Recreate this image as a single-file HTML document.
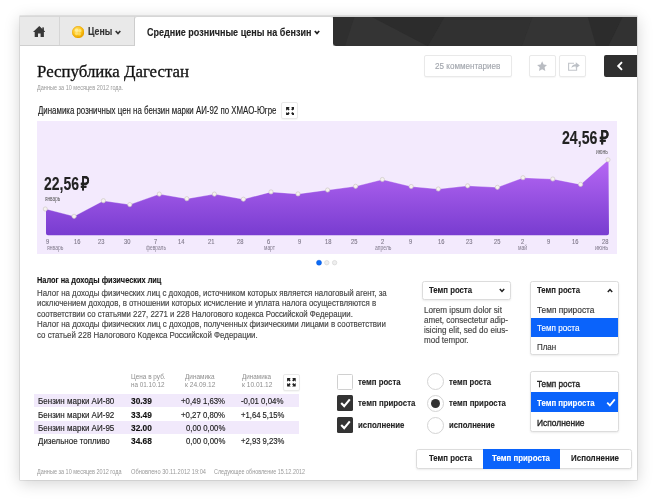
<!DOCTYPE html>
<html lang="ru"><head><meta charset="utf-8"><title>Республика Дагестан</title>
<style>
html,body{margin:0;padding:0;background:#fff}
body{width:656px;height:500px;position:relative;overflow:hidden;font-family:"Liberation Sans",sans-serif}
.abs,.t,svg.a{position:absolute}
.t{white-space:nowrap;transform-origin:0 50%;display:block}
.s{font-family:"Liberation Serif",serif}
#card{left:20px;top:16px;width:617px;height:464px;background:#fff;border-top:1px solid #d4d4d4;box-sizing:border-box;box-shadow:0 3px 15px rgba(0,0,0,.18),0 0 0 .5px rgba(0,0,0,.16)}
#tabs{left:20px;top:16px;width:314px;height:29.5px;background:#e9e9e9;border-bottom:1px solid #cfcfcf;box-sizing:border-box;box-shadow:inset 0 1px 0 #d8d8d8}
#tabdiv{left:59px;top:16px;width:1px;height:29px;background:#d6d6d6}
#tabact{left:134px;top:16px;width:199px;height:30px;background:#fff;border-left:1px solid #cdcdcd;border-top:1px solid #d6d6d6;border-radius:3px 3px 0 0;box-sizing:border-box}
#dark{left:332.6px;top:16.8px;width:304.4px;height:28.8px;background:#2f2f2f;border-radius:0 0 0 3px;overflow:hidden}
.btn{background:#fff;border:1px solid #e9e9e9;border-radius:2px;box-sizing:border-box;box-shadow:0 1px 1px rgba(0,0,0,.04)}
.sel{background:#fff;border:1px solid #dcdcdc;border-radius:2.5px;box-sizing:border-box;box-shadow:0 1px 2px rgba(0,0,0,.08)}
.row{left:34px;width:265px;height:13px;background:#f1e9fb}
.cb{width:16px;height:16px;box-sizing:border-box;border-radius:1.5px}
.cb.off{background:#fff;border:1px solid #d0d0d0}
.cb.on{background:#333}
.rd{width:17px;height:17px;box-sizing:border-box;border-radius:50%;background:#fff;border:1px solid #d4d4d4}
</style></head><body>
<div id="card" class="abs"></div>
<div id="tabs" class="abs"></div>
<div id="tabdiv" class="abs"></div>
<div id="tabact" class="abs"></div>
<div id="dark" class="abs"><svg width="305" height="29" viewBox="0 0 305 29" style="display:block"><polygon points="21.8,-0.8 37.6,-0.8 95.0,29.2 12.0,29.2" fill="#343434"/><polygon points="37.6,-0.8 112.0,-0.8 95.0,29.2" fill="#2c2c2c"/><polygon points="112.0,-0.8 199.8,-0.8 188.9,29.2 95.0,29.2" fill="#313131"/><polygon points="199.8,-0.8 254.7,-0.8 263.3,29.2 188.9,29.2" fill="#343434"/><polygon points="254.7,-0.8 290.1,-0.8 275.4,29.2 263.3,29.2" fill="#2c2c2c"/><polygon points="290.1,-0.8 307.4,-0.8 307.4,29.2 275.4,29.2" fill="#323232"/></svg></div>
<!-- home icon -->
<svg class="a" style="left:32.9px;top:25.8px" width="12.6" height="11.2" viewBox="0 0 12.6 11.2"><path d="M6.3 0 L12.6 6.1 H10.9 V11.2 H7.6 V7.4 H5 V11.2 H1.7 V6.1 H0 Z" fill="#383838"/><rect x="9.3" y="1.4" width="1.6" height="3.4" fill="#383838"/></svg>
<!-- coin -->
<svg class="a" style="left:71.7px;top:25.8px" width="12.4" height="12.4" viewBox="0 0 12 12"><defs><radialGradient id="cg" cx="40%" cy="35%" r="65%"><stop offset="0" stop-color="#ffe680"/><stop offset=".6" stop-color="#fcc419"/><stop offset="1" stop-color="#e8a200"/></radialGradient></defs><circle cx="6" cy="6" r="5.7" fill="url(#cg)" stroke="#eaa400" stroke-width=".6"/><circle cx="4.5" cy="4.1" r="1.7" fill="#fff0a0" opacity=".85"/><circle cx="7.6" cy="4.6" r="1.6" fill="#ffe98a" opacity=".8"/><circle cx="4.4" cy="7.3" r="1.6" fill="#ffe680" opacity=".75"/><circle cx="7.3" cy="7.7" r="1.5" fill="#ffdf6a" opacity=".7"/></svg>
<!-- chevrons -->
<svg class="a" style="left:115.3px;top:30.2px" width="6" height="5" viewBox="0 0 6 5"><path d="M.7 1 L3 3.5 L5.3 1" fill="none" stroke="#333" stroke-width="1.7"/></svg>
<svg class="a" style="left:313.8px;top:30px" width="6" height="5" viewBox="0 0 6 5"><path d="M.8 1 L3 3.4 L5.2 1" fill="none" stroke="#222" stroke-width="1.7"/></svg>
<!-- buttons -->
<div class="abs btn" style="left:424px;top:55px;width:88px;height:22px"></div>
<div class="abs btn" style="left:529px;top:55px;width:27px;height:22px"></div>
<div class="abs btn" style="left:559px;top:55px;width:26.5px;height:22px"></div>
<svg class="a" style="left:536.8px;top:60.6px" width="10.3" height="10.3" viewBox="0 0 11 11"><path d="M5.5 0.3 L7.1 3.8 L10.9 4.2 L8.1 6.8 L8.9 10.6 L5.5 8.7 L2.1 10.6 L2.9 6.8 L0.1 4.2 L3.9 3.8 Z" fill="#b9bcc2"/></svg>
<svg class="a" style="left:567.6px;top:60.8px" width="12" height="10" viewBox="0 0 12 10"><path d="M6 2.2 H0.6 V9.2 H8.6 V7" fill="none" stroke="#c2c5ca" stroke-width="1.1"/><path d="M3.4 7 C3.8 4.4 5.4 3.3 7.8 3.3 V1.2 L11.8 4.4 L7.8 7.6 V5.5 C6 5.5 4.5 5.8 3.4 7 Z" fill="#bcc0c6"/></svg>
<div class="abs" style="left:604px;top:55px;width:33px;height:22px;background:#2f2f2f;border-radius:2px 0 0 2px"></div>
<svg class="a" style="left:615.6px;top:61.3px" width="8" height="10" viewBox="0 0 8 10"><path d="M6 1.2 L2.2 5 L6 8.8" fill="none" stroke="#fff" stroke-width="1.9"/></svg>
<!-- fullscreen btn 1 -->
<div class="abs btn" style="left:280.9px;top:102px;width:17px;height:17px"></div>
<svg class="a fs" style="left:285.7px;top:106.6px" width="8.8" height="8.6" viewBox="0 0 9 9"><path d="M0 0H3.8L0 3.8Z M9 0V3.8L5.2 0Z M0 9V5.2L3.8 9Z M9 9H5.2L9 5.2Z" fill="#222"/><path d="M1 1L3.1 3.1M8 1L5.9 3.1M1 8L3.1 5.9M8 8L5.9 5.9" stroke="#222" stroke-width="1.9"/></svg>
<!-- chart -->
<svg class="a" style="left:37px;top:120.8px" width="580.2" height="133.5" viewBox="37 120.8 580.2 133.5">
<defs><linearGradient id="pg" x1="0" y1="0" x2="0" y2="1"><stop offset="0" stop-color="#b768f4"/><stop offset="1" stop-color="#783cd0"/></linearGradient></defs>
<rect x="37" y="120.8" width="580.2" height="133.5" fill="#f3eafd"/>
<path id="area" d="M46,208.8 L74.1,216.1 L103.4,200.5 L129.8,204.4 L159.3,193.9 L186.8,198.5 L214.4,193.9 L243.4,199 L271,191.7 L298,193.7 L327.6,189.8 L355.6,186.1 L382.4,179.3 L411.2,186.3 L438.3,188.8 L467.6,185.6 L497.4,187.1 L523,177.5 L552.8,178.8 L580.6,184.2 L608.5,159.6 L609,233 Q609,235 607,235 L48,235 Q46,235 46,233 Z" fill="url(#pg)"/>
<polyline points="46,208.8 74.1,216.1 103.4,200.5 129.8,204.4 159.3,193.9 186.8,198.5 214.4,193.9 243.4,199 271,191.7 298,193.7 327.6,189.8 355.6,186.1 382.4,179.3 411.2,186.3 438.3,188.8 467.6,185.6 497.4,187.1 523,177.5 552.8,178.8 580.6,184.2 608.5,159.6" fill="none" stroke="#fff" stroke-opacity=".35" stroke-width=".9"/>
<g fill="#f5f2ef" stroke="#cfc8c6" stroke-width=".7">
<circle cx="45.3" cy="208.8" r="2.1"/><circle cx="74.1" cy="216.1" r="2.1"/><circle cx="103.4" cy="200.5" r="2.1"/><circle cx="129.8" cy="204.4" r="2.1"/><circle cx="159.3" cy="193.9" r="2.1"/><circle cx="186.8" cy="198.5" r="2.1"/><circle cx="214.4" cy="193.9" r="2.1"/><circle cx="243.4" cy="199" r="2.1"/><circle cx="271" cy="191.7" r="2.1"/><circle cx="298" cy="193.7" r="2.1"/><circle cx="327.6" cy="189.8" r="2.1"/><circle cx="355.6" cy="186.1" r="2.1"/><circle cx="382.4" cy="179.3" r="2.1"/><circle cx="411.2" cy="186.3" r="2.1"/><circle cx="438.3" cy="188.8" r="2.1"/><circle cx="467.6" cy="185.6" r="2.1"/><circle cx="497.4" cy="187.1" r="2.1"/><circle cx="523" cy="177.5" r="2.1"/><circle cx="552.8" cy="178.8" r="2.1"/><circle cx="580.6" cy="184.2" r="2.1"/><circle cx="608" cy="159.6" r="2.1"/>
</g></svg>
<!-- pager dots -->
<svg class="a" style="left:314px;top:258.5px" width="26" height="8" viewBox="314 258 26 8"><circle cx="319" cy="261.7" r="2.5" fill="#0a6cf5" stroke="#0a55d8" stroke-width=".5"/><circle cx="326.8" cy="261.7" r="2.2" fill="#eee" stroke="#d5d5d5" stroke-width=".7"/><circle cx="334.6" cy="261.7" r="2.2" fill="#eee" stroke="#d5d5d5" stroke-width=".7"/></svg>
<!-- select 1 -->
<div class="abs sel" style="left:422px;top:280.7px;width:89px;height:19.8px"></div>
<svg class="a" style="left:498.8px;top:288.2px" width="6" height="5" viewBox="0 0 6 5"><path d="M.8 1 L3 3.4 L5.2 1" fill="none" stroke="#222" stroke-width="1.5"/></svg>
<!-- dropdown -->
<div class="abs sel" style="left:530.2px;top:281.2px;width:88.8px;height:74px"></div>
<svg class="a" style="left:607px;top:288px" width="6" height="5" viewBox="0 0 6 5"><path d="M.8 4 L3 1.6 L5.2 4" fill="none" stroke="#222" stroke-width="1.5"/></svg>
<div class="abs" style="left:530.7px;top:317.6px;width:87.8px;height:19.2px;background:#0a63fb"></div>
<!-- table -->
<div class="abs btn" style="left:282.9px;top:374px;width:17px;height:17px"></div>
<svg class="a fs" style="left:287.3px;top:378.2px" width="8.8" height="8.6" viewBox="0 0 9 9"><path d="M0 0H3.8L0 3.8Z M9 0V3.8L5.2 0Z M0 9V5.2L3.8 9Z M9 9H5.2L9 5.2Z" fill="#222"/><path d="M1 1L3.1 3.1M8 1L5.9 3.1M1 8L3.1 5.9M8 8L5.9 5.9" stroke="#222" stroke-width="1.9"/></svg>
<div class="abs row" style="top:394.2px"></div>
<div class="abs row" style="top:421.2px"></div>
<!-- checkboxes -->
<div class="abs cb off" style="left:337px;top:373.5px"></div>
<div class="abs cb on" style="left:337px;top:395.2px"></div>
<div class="abs cb on" style="left:337px;top:416.8px"></div>
<svg class="a" style="left:339.6px;top:398.3px" width="11" height="10" viewBox="0 0 11 10"><path d="M1.2 5 L4.2 8.1 L9.8 1.4" fill="none" stroke="#fff" stroke-width="2.1"/></svg>
<svg class="a" style="left:339.6px;top:419.9px" width="11" height="10" viewBox="0 0 11 10"><path d="M1.2 5 L4.2 8.1 L9.8 1.4" fill="none" stroke="#fff" stroke-width="2.1"/></svg>
<!-- radios -->
<div class="abs rd" style="left:427px;top:373.3px"></div>
<div class="abs rd" style="left:427px;top:395px"></div>
<div class="abs rd" style="left:427px;top:416.7px"></div>
<div class="abs" style="left:431px;top:399px;width:9px;height:9px;border-radius:50%;background:#333"></div>
<!-- listbox -->
<div class="abs sel" style="left:530.2px;top:371.3px;width:88.8px;height:60.9px"></div>
<div class="abs" style="left:530.7px;top:392px;width:87.8px;height:19.8px;background:#0a63fb"></div>
<svg class="a" style="left:605.9px;top:397.6px" width="10" height="9" viewBox="0 0 10 9"><path d="M1.2 4.6 L3.9 7.3 L8.8 1.4" fill="none" stroke="#fff" stroke-width="1.8"/></svg>
<!-- segmented -->
<div class="abs sel" style="left:416px;top:449px;width:215.5px;height:19.5px"></div>
<div class="abs" style="left:483px;top:449px;width:77px;height:19.5px;background:#0a63fb"></div>
<div id="tx" class="abs" style="left:0;top:0;width:656px;height:500px;will-change:transform">
<span class="t" style="left:88.0px;top:25.3px;font-size:10.2px;line-height:13.26px;color:#333;font-weight:700;transform:scaleX(0.8650);-webkit-text-stroke:0.12px;">Цены</span>
<span class="t" style="left:147.4px;top:25.6px;font-size:10.2px;line-height:13.26px;color:#222;font-weight:700;transform:scaleX(0.8860);-webkit-text-stroke:0.12px;">Средние розничные цены на бензин</span>
<span class="t" style="left:434.7px;top:61.0px;font-size:8.7px;line-height:11.31px;color:#a3a7ae;transform:scaleX(0.9312);-webkit-text-stroke:0.15px;">25 комментариев</span>
<span class="t s" style="left:37.4px;top:60.2px;font-size:17.4px;line-height:22.62px;color:#111;transform:scaleX(0.9685);-webkit-text-stroke:0.3px;">Республика Дагестан</span>
<span class="t" style="left:37.4px;top:83.0px;font-size:7px;line-height:9.1px;color:#999;transform:scaleX(0.7903);">Данные за 10 месяцев 2012 года.</span>
<span class="t" style="left:37.6px;top:102.8px;font-size:11px;line-height:14.3px;color:#222;transform:scaleX(0.7161);-webkit-text-stroke:0.15px;">Динамика розничных цен на бензин марки АИ-92 по ХМАО-Югре</span>
<span class="t" style="left:43.9px;top:171.7px;font-size:19px;line-height:24.7px;color:#222;font-weight:700;transform:scaleX(0.7361);-webkit-text-stroke:0.12px;">22,56</span>
<span class="t" style="left:81.4px;top:171.7px;font-size:19px;line-height:24.7px;color:#222;font-weight:700;transform:scaleX(0.7545);-webkit-text-stroke:0.12px;">₽</span>
<span class="t" style="left:44.6px;top:195.4px;font-size:6.5px;line-height:8.45px;color:#555;transform:scaleX(0.7201);">январь</span>
<span class="t" style="left:562.2px;top:126.0px;font-size:19px;line-height:24.7px;color:#222;font-weight:700;transform:scaleX(0.7445);-webkit-text-stroke:0.12px;">24,56</span>
<span class="t" style="left:599.6px;top:126.0px;font-size:19px;line-height:24.7px;color:#222;font-weight:700;transform:scaleX(0.8000);-webkit-text-stroke:0.12px;">₽</span>
<span class="t" style="left:596.3px;top:148.1px;font-size:6.5px;line-height:8.45px;color:#555;transform:scaleX(0.7621);">июнь</span>
<span class="t" style="left:46.0px;top:237.0px;font-size:7.2px;line-height:9.36px;color:#807a8c;transform:scaleX(0.8000);-webkit-text-stroke:0.15px;">9</span>
<span class="t" style="left:73.8px;top:237.0px;font-size:7.2px;line-height:9.36px;color:#807a8c;transform:scaleX(0.8000);-webkit-text-stroke:0.15px;">16</span>
<span class="t" style="left:97.8px;top:237.0px;font-size:7.2px;line-height:9.36px;color:#807a8c;transform:scaleX(0.8000);-webkit-text-stroke:0.15px;">23</span>
<span class="t" style="left:124.4px;top:237.0px;font-size:7.2px;line-height:9.36px;color:#807a8c;transform:scaleX(0.8000);-webkit-text-stroke:0.15px;">30</span>
<span class="t" style="left:154.4px;top:237.0px;font-size:7.2px;line-height:9.36px;color:#807a8c;transform:scaleX(0.8000);-webkit-text-stroke:0.15px;">7</span>
<span class="t" style="left:177.8px;top:237.0px;font-size:7.2px;line-height:9.36px;color:#807a8c;transform:scaleX(0.8000);-webkit-text-stroke:0.15px;">14</span>
<span class="t" style="left:207.8px;top:237.0px;font-size:7.2px;line-height:9.36px;color:#807a8c;transform:scaleX(0.8000);-webkit-text-stroke:0.15px;">21</span>
<span class="t" style="left:236.8px;top:237.0px;font-size:7.2px;line-height:9.36px;color:#807a8c;transform:scaleX(0.8000);-webkit-text-stroke:0.15px;">28</span>
<span class="t" style="left:267.4px;top:237.0px;font-size:7.2px;line-height:9.36px;color:#807a8c;transform:scaleX(0.8000);-webkit-text-stroke:0.15px;">6</span>
<span class="t" style="left:298.4px;top:237.0px;font-size:7.2px;line-height:9.36px;color:#807a8c;transform:scaleX(0.8000);-webkit-text-stroke:0.15px;">9</span>
<span class="t" style="left:324.8px;top:237.0px;font-size:7.2px;line-height:9.36px;color:#807a8c;transform:scaleX(0.8000);-webkit-text-stroke:0.15px;">18</span>
<span class="t" style="left:350.5px;top:237.0px;font-size:7.2px;line-height:9.36px;color:#807a8c;transform:scaleX(0.8000);-webkit-text-stroke:0.15px;">25</span>
<span class="t" style="left:381.4px;top:237.0px;font-size:7.2px;line-height:9.36px;color:#807a8c;transform:scaleX(0.8000);-webkit-text-stroke:0.15px;">2</span>
<span class="t" style="left:409.4px;top:237.0px;font-size:7.2px;line-height:9.36px;color:#807a8c;transform:scaleX(0.8000);-webkit-text-stroke:0.15px;">9</span>
<span class="t" style="left:437.8px;top:237.0px;font-size:7.2px;line-height:9.36px;color:#807a8c;transform:scaleX(0.8000);-webkit-text-stroke:0.15px;">16</span>
<span class="t" style="left:465.8px;top:237.0px;font-size:7.2px;line-height:9.36px;color:#807a8c;transform:scaleX(0.8000);-webkit-text-stroke:0.15px;">23</span>
<span class="t" style="left:494.2px;top:237.0px;font-size:7.2px;line-height:9.36px;color:#807a8c;transform:scaleX(0.8000);-webkit-text-stroke:0.15px;">25</span>
<span class="t" style="left:520.8px;top:237.0px;font-size:7.2px;line-height:9.36px;color:#807a8c;transform:scaleX(0.8000);-webkit-text-stroke:0.15px;">2</span>
<span class="t" style="left:547.4px;top:237.0px;font-size:7.2px;line-height:9.36px;color:#807a8c;transform:scaleX(0.8000);-webkit-text-stroke:0.15px;">9</span>
<span class="t" style="left:572.3px;top:237.0px;font-size:7.2px;line-height:9.36px;color:#807a8c;transform:scaleX(0.8000);-webkit-text-stroke:0.15px;">16</span>
<span class="t" style="left:601.8px;top:237.0px;font-size:7.2px;line-height:9.36px;color:#807a8c;transform:scaleX(0.8000);-webkit-text-stroke:0.15px;">28</span>
<span class="t" style="left:46.5px;top:243.5px;font-size:6.8px;line-height:8.84px;color:#807a8c;transform:scaleX(0.7428);">январь</span>
<span class="t" style="left:146.1px;top:243.5px;font-size:6.8px;line-height:8.84px;color:#807a8c;transform:scaleX(0.7091);">февраль</span>
<span class="t" style="left:263.5px;top:243.5px;font-size:6.8px;line-height:8.84px;color:#807a8c;transform:scaleX(0.7235);">март</span>
<span class="t" style="left:374.8px;top:243.5px;font-size:6.8px;line-height:8.84px;color:#807a8c;transform:scaleX(0.7395);">апрель</span>
<span class="t" style="left:517.7px;top:243.5px;font-size:6.8px;line-height:8.84px;color:#807a8c;transform:scaleX(0.7510);">май</span>
<span class="t" style="left:595.1px;top:243.5px;font-size:6.8px;line-height:8.84px;color:#807a8c;transform:scaleX(0.8147);">июнь</span>
<span class="t" style="left:37.3px;top:274.1px;font-size:9.5px;line-height:12.35px;color:#111;font-weight:700;transform:scaleX(0.7769);-webkit-text-stroke:0.12px;">Налог на доходы физических лиц</span>
<span class="t" style="left:37.3px;top:287.9px;font-size:8.6px;line-height:11.18px;color:#444;transform:scaleX(0.9165);-webkit-text-stroke:0.15px;">Налог на доходы физических лиц с доходов, источником которых является налоговый агент, за</span>
<span class="t" style="left:37.3px;top:298.4px;font-size:8.6px;line-height:11.18px;color:#444;transform:scaleX(0.9150);-webkit-text-stroke:0.15px;">исключением доходов, в отношении которых исчисление и уплата налога осуществляются в</span>
<span class="t" style="left:37.3px;top:308.8px;font-size:8.6px;line-height:11.18px;color:#444;transform:scaleX(0.9087);-webkit-text-stroke:0.15px;">соответствии со статьями 227, 2271 и 228 Налогового кодекса Российской Федерации.</span>
<span class="t" style="left:37.3px;top:319.2px;font-size:8.6px;line-height:11.18px;color:#444;transform:scaleX(0.9189);-webkit-text-stroke:0.15px;">Налог на доходы физических лиц с доходов, полученных физическими лицами в соответствии</span>
<span class="t" style="left:37.3px;top:329.6px;font-size:8.6px;line-height:11.18px;color:#444;transform:scaleX(0.9199);-webkit-text-stroke:0.15px;">со статьей 228 Налогового Кодекса Российской Федерации.</span>
<span class="t" style="left:428.8px;top:284.4px;font-size:9.8px;line-height:12.74px;color:#222;font-weight:700;transform:scaleX(0.7926);-webkit-text-stroke:0.12px;">Темп роста</span>
<span class="t" style="left:424.0px;top:305.4px;font-size:8.6px;line-height:11.18px;color:#444;transform:scaleX(0.9482);-webkit-text-stroke:0.15px;">Lorem ipsum dolor sit</span>
<span class="t" style="left:424.0px;top:315.4px;font-size:8.6px;line-height:11.18px;color:#444;transform:scaleX(0.9353);-webkit-text-stroke:0.15px;">amet, consectetur adip-</span>
<span class="t" style="left:424.0px;top:325.4px;font-size:8.6px;line-height:11.18px;color:#444;transform:scaleX(0.9453);-webkit-text-stroke:0.15px;">isicing elit, sed do eius-</span>
<span class="t" style="left:424.0px;top:335.4px;font-size:8.6px;line-height:11.18px;color:#444;transform:scaleX(0.9337);-webkit-text-stroke:0.15px;">mod tempor.</span>
<span class="t" style="left:536.8px;top:284.4px;font-size:9.8px;line-height:12.74px;color:#222;font-weight:700;transform:scaleX(0.7926);-webkit-text-stroke:0.12px;">Темп роста</span>
<span class="t" style="left:536.8px;top:303.5px;font-size:9.6px;line-height:12.48px;color:#333;transform:scaleX(0.8685);-webkit-text-stroke:0.15px;">Темп прироста</span>
<span class="t" style="left:536.8px;top:321.8px;font-size:9.6px;line-height:12.48px;color:#fff;transform:scaleX(0.8466);-webkit-text-stroke:0.15px;">Темп роста</span>
<span class="t" style="left:536.8px;top:340.5px;font-size:9.6px;line-height:12.48px;color:#333;transform:scaleX(0.8297);-webkit-text-stroke:0.15px;">План</span>
<span class="t" style="left:130.7px;top:371.7px;font-size:7px;line-height:9.1px;color:#8e8e8e;transform:scaleX(0.9154);">Цена в руб.</span>
<span class="t" style="left:130.7px;top:380.3px;font-size:7px;line-height:9.1px;color:#8e8e8e;transform:scaleX(0.9066);">на 01.10.12</span>
<span class="t" style="left:185.0px;top:371.7px;font-size:7px;line-height:9.1px;color:#8e8e8e;transform:scaleX(0.9147);">Динамика</span>
<span class="t" style="left:185.0px;top:380.3px;font-size:7px;line-height:9.1px;color:#8e8e8e;transform:scaleX(0.9422);">к 24.09.12</span>
<span class="t" style="left:241.5px;top:371.7px;font-size:7px;line-height:9.1px;color:#8e8e8e;transform:scaleX(0.9023);">Динамика</span>
<span class="t" style="left:241.5px;top:380.3px;font-size:7px;line-height:9.1px;color:#8e8e8e;transform:scaleX(0.9422);">к 10.01.12</span>
<span class="t" style="left:38.0px;top:396.0px;font-size:8.8px;line-height:11.44px;color:#222;transform:scaleX(0.9114);-webkit-text-stroke:0.15px;">Бензин марки АИ-80</span>
<span class="t" style="left:131.0px;top:396.0px;font-size:8.8px;line-height:11.44px;color:#111;font-weight:700;transform:scaleX(0.9493);-webkit-text-stroke:0.12px;">30.39</span>
<span class="t" style="left:180.8px;top:396.0px;font-size:8.8px;line-height:11.44px;color:#222;transform:scaleX(0.8861);-webkit-text-stroke:0.15px;">+0,49 1,63%</span>
<span class="t" style="left:241.4px;top:396.0px;font-size:8.8px;line-height:11.44px;color:#222;transform:scaleX(0.8935);-webkit-text-stroke:0.15px;">-0,01 0,04%</span>
<span class="t" style="left:38.0px;top:409.5px;font-size:8.8px;line-height:11.44px;color:#222;transform:scaleX(0.9114);-webkit-text-stroke:0.15px;">Бензин марки АИ-92</span>
<span class="t" style="left:131.0px;top:409.5px;font-size:8.8px;line-height:11.44px;color:#111;font-weight:700;transform:scaleX(0.9493);-webkit-text-stroke:0.12px;">33.49</span>
<span class="t" style="left:180.8px;top:409.5px;font-size:8.8px;line-height:11.44px;color:#222;transform:scaleX(0.8861);-webkit-text-stroke:0.15px;">+0,27 0,80%</span>
<span class="t" style="left:241.4px;top:409.5px;font-size:8.8px;line-height:11.44px;color:#222;transform:scaleX(0.8740);-webkit-text-stroke:0.15px;">+1,64 5,15%</span>
<span class="t" style="left:38.0px;top:423.0px;font-size:8.8px;line-height:11.44px;color:#222;transform:scaleX(0.9114);-webkit-text-stroke:0.15px;">Бензин марки АИ-95</span>
<span class="t" style="left:131.0px;top:423.0px;font-size:8.8px;line-height:11.44px;color:#111;font-weight:700;transform:scaleX(0.9493);-webkit-text-stroke:0.12px;">32.00</span>
<span class="t" style="left:185.5px;top:423.0px;font-size:8.8px;line-height:11.44px;color:#222;transform:scaleX(0.8828);-webkit-text-stroke:0.15px;">0,00 0,00%</span>
<span class="t" style="left:38.0px;top:436.4px;font-size:8.8px;line-height:11.44px;color:#222;transform:scaleX(0.9040);-webkit-text-stroke:0.15px;">Дизельное топливо</span>
<span class="t" style="left:131.0px;top:436.4px;font-size:8.8px;line-height:11.44px;color:#111;font-weight:700;transform:scaleX(0.9493);-webkit-text-stroke:0.12px;">34.68</span>
<span class="t" style="left:185.5px;top:436.4px;font-size:8.8px;line-height:11.44px;color:#222;transform:scaleX(0.8828);-webkit-text-stroke:0.15px;">0,00 0,00%</span>
<span class="t" style="left:241.4px;top:436.4px;font-size:8.8px;line-height:11.44px;color:#222;transform:scaleX(0.8740);-webkit-text-stroke:0.15px;">+2,93 9,23%</span>
<span class="t" style="left:37.3px;top:467.3px;font-size:7px;line-height:9.1px;color:#999;transform:scaleX(0.7887);">Данные за 10 месяцев 2012 года</span>
<span class="t" style="left:131.0px;top:467.3px;font-size:7px;line-height:9.1px;color:#999;transform:scaleX(0.8114);">Обновлено 30.11.2012 19:04</span>
<span class="t" style="left:214.0px;top:467.3px;font-size:7px;line-height:9.1px;color:#999;transform:scaleX(0.7779);">Следующее обновление 15.12.2012</span>
<span class="t" style="left:358.4px;top:376.4px;font-size:9.4px;line-height:12.22px;color:#222;font-weight:700;transform:scaleX(0.8315);-webkit-text-stroke:0.12px;">темп роста</span>
<span class="t" style="left:358.4px;top:397.1px;font-size:9.4px;line-height:12.22px;color:#222;font-weight:700;transform:scaleX(0.8393);-webkit-text-stroke:0.12px;">темп прироста</span>
<span class="t" style="left:358.4px;top:418.5px;font-size:9.4px;line-height:12.22px;color:#222;font-weight:700;transform:scaleX(0.8344);-webkit-text-stroke:0.12px;">исполнение</span>
<span class="t" style="left:449.0px;top:376.4px;font-size:9.4px;line-height:12.22px;color:#222;font-weight:700;transform:scaleX(0.8217);-webkit-text-stroke:0.12px;">темп роста</span>
<span class="t" style="left:449.0px;top:397.1px;font-size:9.4px;line-height:12.22px;color:#222;font-weight:700;transform:scaleX(0.8305);-webkit-text-stroke:0.12px;">темп прироста</span>
<span class="t" style="left:449.0px;top:418.5px;font-size:9.4px;line-height:12.22px;color:#222;font-weight:700;transform:scaleX(0.8236);-webkit-text-stroke:0.12px;">исполнение</span>
<span class="t" style="left:536.5px;top:377.8px;font-size:9.4px;line-height:12.22px;color:#222;transform:scaleX(0.8764);-webkit-text-stroke:0.35px;">Темп роста</span>
<span class="t" style="left:536.5px;top:396.8px;font-size:9.4px;line-height:12.22px;color:#fff;font-weight:700;transform:scaleX(0.8340);-webkit-text-stroke:0.12px;">Темп прироста</span>
<span class="t" style="left:536.5px;top:416.6px;font-size:9.4px;line-height:12.22px;color:#222;transform:scaleX(0.8962);-webkit-text-stroke:0.35px;">Исполнение</span>
<span class="t" style="left:428.5px;top:453.3px;font-size:9.2px;line-height:11.96px;color:#222;font-weight:700;transform:scaleX(0.8452);-webkit-text-stroke:0.12px;">Темп роста</span>
<span class="t" style="left:492.0px;top:453.3px;font-size:9.2px;line-height:11.96px;color:#fff;font-weight:700;transform:scaleX(0.8571);-webkit-text-stroke:0.12px;">Темп прироста</span>
<span class="t" style="left:570.7px;top:453.3px;font-size:9.2px;line-height:11.96px;color:#222;font-weight:700;transform:scaleX(0.8656);-webkit-text-stroke:0.12px;">Исполнение</span>
</div>
</body></html>
